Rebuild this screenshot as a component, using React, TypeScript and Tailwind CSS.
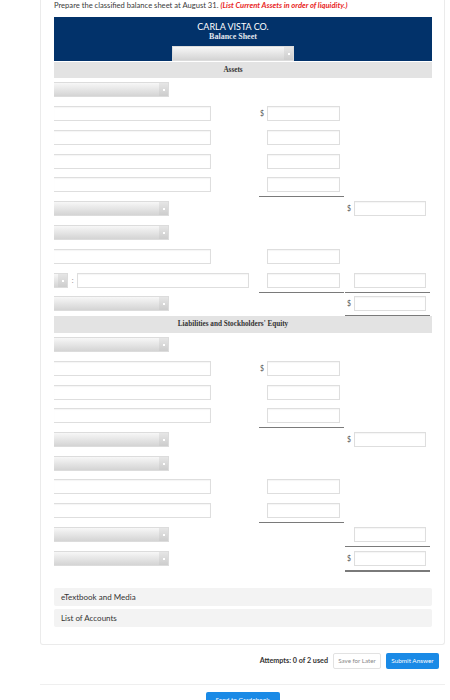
import type { ReactElement, ReactNode } from 'react'

const lato = "font-['Lato','Liberation_Sans',sans-serif]"
const serif = "font-['Liberation_Serif','Times_New_Roman',serif]"

function Select({ width = 'w-[115px]', clipped = true }: { width?: string; clipped?: boolean }): ReactElement {
  return (
    <div
      className={`flex h-[15px] ${width} border border-[#dcdcdc] bg-gradient-to-b from-[#f7f7f7] to-[#d4d4d4] ${
        clipped ? 'border-l-0' : ''
      }`}
    >
      <div className="flex-1" />
      <div className="flex w-[9px] items-center justify-center bg-gradient-to-b from-[#e6e6e6] to-[#cdcdcd]">
        <div className="h-[2px] w-[2px] bg-white" />
      </div>
    </div>
  )
}

function TextBox({ width, clipped = false }: { width: string; clipped?: boolean }): ReactElement {
  return (
    <div
      className={`h-[15px] ${width} border border-[#dedede] bg-white shadow-[inset_0_1px_1px_rgba(0,0,0,0.04)] ${
        clipped ? 'border-l-0' : ''
      }`}
    />
  )
}

// middle column: optional $, amount box, optional rule below
function MidCell({ dollar = false, rule = false, empty = false }: { dollar?: boolean; rule?: boolean; empty?: boolean }): ReactElement {
  return (
    <div className={`flex w-[85px] shrink-0 items-start ${rule ? 'border-b border-[#7a7a7a] pb-[4px]' : ''}`}>
      <span className={`w-[8px] pl-[1px] text-[7px] leading-[15px] text-[#555] ${lato}`}>{dollar ? '$' : ''}</span>
      {!empty && <TextBox width="w-[73px]" />}
    </div>
  )
}

function RightCell({
  dollar = false,
  rule = false,
  double = false,
  empty = false,
}: {
  dollar?: boolean
  rule?: boolean
  double?: boolean
  empty?: boolean
}): ReactElement {
  const ruleCls = double ? 'border-b-2 border-[#7a7a7a] pb-[4px]' : rule ? 'border-b border-[#7a7a7a] pb-[4px]' : ''
  return (
    <div className={`ml-[1px] flex w-[85px] shrink-0 items-start ${ruleCls}`}>
      <span className={`w-[9px] pl-[2px] text-[7px] leading-[15px] text-[#555] ${lato}`}>{dollar ? '$' : ''}</span>
      {!empty && <TextBox width="w-[72px]" />}
    </div>
  )
}

function Row({ mt, children }: { mt: string; children: ReactNode }): ReactElement {
  return <div className={`flex items-start ${mt}`}>{children}</div>
}

function Left({ children }: { children: ReactNode }): ReactElement {
  return <div className="flex w-[205px] shrink-0 items-center">{children}</div>
}

function Band({ label, mt, h }: { label: string; mt: string; h: string }): ReactElement {
  return (
    <div
      className={`${mt} ${h} flex items-center justify-center bg-[#e3e3e3] pr-[20px] text-[7.2px] font-bold text-[#333] ${serif}`}
    >
      {label}
    </div>
  )
}

function AccordionItem({ label, mt }: { label: string; mt: string }): ReactElement {
  return (
    <div className={`${mt} flex h-[18px] items-center rounded-[2px] bg-[#f3f3f3] pl-[7px] text-[8px] text-[#333] ${lato}`}>
      {label}
    </div>
  )
}

export default function App(): ReactElement {
  return (
    <div className={`h-[700px] w-[450px] overflow-hidden bg-white ${lato}`}>
      <div className="ml-[40px] w-[405px] rounded-b-[3px] border border-t-0 border-[#ebebeb] pb-[17px] pl-[13px] pr-[12px]">
        <p className="pt-[1px] text-[7.6px] leading-[9px] text-[#3a3a3a]">
          Prepare the classified balance sheet at August 31.{' '}
          <span className="font-bold italic text-[#e8241d]">(List Current Assets in order of liquidity.)</span>
        </p>

        {/* statement heading */}
        <div className="mt-[7px] flex h-[44px] flex-col items-center bg-[#02326a] pr-[20px] pt-[4px]">
          <div className="text-[9px] leading-[11px] text-white">CARLA VISTA CO.</div>
          <div className={`text-[8px] font-bold leading-[9px] text-[#e1e6ee] ${serif}`}>Balance Sheet</div>
          <div className="mt-[5px]">
            <Select width="w-[122px]" clipped={false} />
          </div>
        </div>

        <Band label="Assets" mt="mt-[1px]" h="h-[16px]" />

        <Row mt="mt-[4px]">
          <Left>
            <Select />
          </Left>
        </Row>
        <Row mt="mt-[9px]">
          <Left>
            <TextBox width="w-[157px]" clipped />
          </Left>
          <MidCell dollar />
        </Row>
        <Row mt="mt-[9px]">
          <Left>
            <TextBox width="w-[157px]" clipped />
          </Left>
          <MidCell />
        </Row>
        <Row mt="mt-[9px]">
          <Left>
            <TextBox width="w-[157px]" clipped />
          </Left>
          <MidCell />
        </Row>
        <Row mt="mt-[8px]">
          <Left>
            <TextBox width="w-[157px]" clipped />
          </Left>
          <MidCell rule />
        </Row>
        <Row mt="mt-[4px]">
          <Left>
            <Select />
          </Left>
          <MidCell empty />
          <RightCell dollar />
        </Row>
        <Row mt="mt-[9px]">
          <Left>
            <Select />
          </Left>
        </Row>
        <Row mt="mt-[9px]">
          <Left>
            <TextBox width="w-[157px]" clipped />
          </Left>
          <MidCell />
        </Row>
        <Row mt="mt-[9px]">
          <Left>
            <Select width="w-[14px]" />
            <span className="w-[9px] text-center text-[7px] leading-[15px] text-[#888]">:</span>
            <TextBox width="w-[172px]" />
          </Left>
          <MidCell rule />
          <RightCell rule />
        </Row>
        <Row mt="mt-[3px]">
          <Left>
            <Select />
          </Left>
          <MidCell empty />
          <RightCell dollar rule />
        </Row>

        <Band label="Liabilities and Stockholders' Equity" mt="mt-0" h="h-[17px]" />

        <Row mt="mt-[4px]">
          <Left>
            <Select />
          </Left>
        </Row>
        <Row mt="mt-[9px]">
          <Left>
            <TextBox width="w-[157px]" clipped />
          </Left>
          <MidCell dollar />
        </Row>
        <Row mt="mt-[9px]">
          <Left>
            <TextBox width="w-[157px]" clipped />
          </Left>
          <MidCell />
        </Row>
        <Row mt="mt-[8px]">
          <Left>
            <TextBox width="w-[157px]" clipped />
          </Left>
          <MidCell rule />
        </Row>
        <Row mt="mt-[4px]">
          <Left>
            <Select />
          </Left>
          <MidCell empty />
          <RightCell dollar />
        </Row>
        <Row mt="mt-[9px]">
          <Left>
            <Select />
          </Left>
        </Row>
        <Row mt="mt-[8px]">
          <Left>
            <TextBox width="w-[157px]" clipped />
          </Left>
          <MidCell />
        </Row>
        <Row mt="mt-[9px]">
          <Left>
            <TextBox width="w-[157px]" clipped />
          </Left>
          <MidCell rule />
        </Row>
        <Row mt="mt-[4px]">
          <Left>
            <Select />
          </Left>
          <MidCell empty />
          <RightCell rule />
        </Row>
        <Row mt="mt-[4px]">
          <Left>
            <Select />
          </Left>
          <MidCell empty />
          <RightCell dollar double />
        </Row>

        <AccordionItem label="eTextbook and Media" mt="mt-[16px]" />
        <AccordionItem label="List of Accounts" mt="mt-[3px]" />
      </div>

      {/* submission bar */}
      <div className="ml-[40px] mt-[8px] flex w-[405px] items-center justify-end gap-[5px] pr-[6px]">
        <span className="text-[7.2px] font-bold text-[#333]">Attempts: 0 of 2 used</span>
        <button
          type="button"
          className="h-[16px] w-[48px] rounded-[2px] border border-[#e2e2e2] bg-white text-[6.2px] text-[#888]"
        >
          Save for Later
        </button>
        <button type="button" className="h-[16px] w-[53px] rounded-[2px] bg-[#1a8ae6] text-[6.4px] text-white">
          Submit Answer
        </button>
      </div>
      <div className="ml-[40px] mt-[15px] w-[405px] border-t border-[#efefef]" />
      <div className="ml-[40px] mt-[7px] flex w-[405px] justify-center">
        <button type="button" className="h-[16px] w-[74px] rounded-[2px] bg-[#1a8ae6] text-[6.4px] text-white">
          Send to Gradebook
        </button>
      </div>
    </div>
  )
}
